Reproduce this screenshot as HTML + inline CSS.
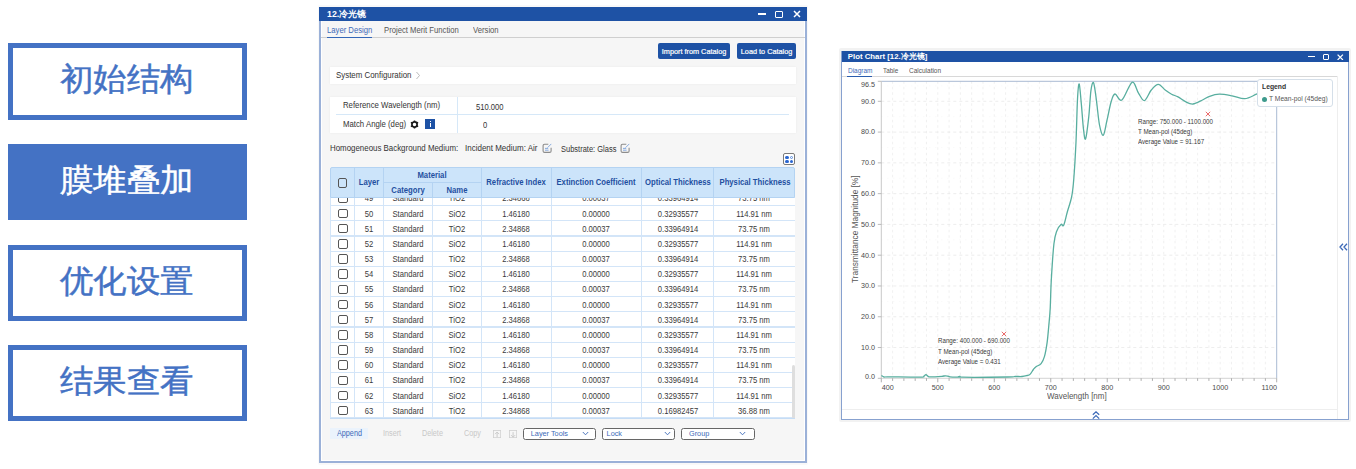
<!DOCTYPE html><html><head><meta charset="utf-8"><style>
*{margin:0;padding:0;box-sizing:border-box}
html,body{width:1356px;height:469px;overflow:hidden;background:#fff}
body{position:relative;font-family:'Liberation Sans',sans-serif;}
.a{position:absolute}
.t{position:absolute;white-space:nowrap;line-height:1}
.box{position:absolute;left:8px;width:239px;border:5px solid #4472c4;color:#4472c4;font-size:32px;text-align:center;}
.bt{display:inline-block;transform:translate(-1.5px,-2px) scaleX(1.045);-webkit-text-stroke:0.45px currentColor}
</style></head><body>

<div class="box" style="top:43px;height:77px;line-height:67px;"><span class="bt">初始结构</span></div>
<div class="box" style="top:144px;height:76px;line-height:66px;background:#4472c4;color:#fff;"><span class="bt">膜堆叠加</span></div>
<div class="box" style="top:245px;height:76px;line-height:66px;"><span class="bt">优化设置</span></div>
<div class="box" style="top:345px;height:76px;line-height:66px;"><span class="bt">结果查看</span></div>
<div class="a" style="left:318px;top:5px;width:490px;height:460px;background:rgba(0,0,0,0.025);border-radius:2px"></div>
<div class="a" style="left:319px;top:7px;width:488px;height:456px;background:#fff;border:2px solid #9bb1d8;border-top:none"></div>
<div class="a" style="left:322px;top:21px;width:482px;height:439px;background:#f6f6f6"></div>
<div class="a" style="left:319px;top:7px;width:488px;height:14px;background:#1e52a5"></div>
<div class="t" style="left:327px;top:9.6px;font-size:8.8px;font-weight:bold;color:#fff">12.冷光镜</div>
<div class="a" style="left:758px;top:13px;width:8px;height:1.5px;background:#fff"></div>
<div class="a" style="left:775px;top:10.5px;width:8px;height:7px;border:1.5px solid #fff;border-radius:1px"></div>
<svg class="a" style="left:793px;top:10px" width="8" height="8" viewBox="0 0 8 8"><path d="M1 1L7 7M7 1L1 7" stroke="#fff" stroke-width="1.5"/></svg>
<div class="a" style="left:321px;top:37px;width:484px;height:1px;background:#cfcfcf"></div>
<div class="a" style="left:326.5px;top:36.6px;width:45.5px;height:1.2px;background:#3467b8"></div>
<div class="t" style="left:326.6px;top:25.50px;font-size:8.70px;color:#3d6ab8;transform:scaleX(0.8850);transform-origin:0 50%">Layer Design</div>
<div class="t" style="left:383.7px;top:25.50px;font-size:8.70px;color:#555;transform:scaleX(0.8850);transform-origin:0 50%">Project Merit Function</div>
<div class="t" style="left:473.4px;top:25.50px;font-size:8.70px;color:#555;transform:scaleX(0.8850);transform-origin:0 50%">Version</div>
<div class="a" style="left:658px;top:43.3px;width:71.5px;height:15.7px;background:#1e52a5;border-radius:2px"></div>
<div class="t" style="left:661.8px;top:47.5px;font-size:7.3px;color:#fff;-webkit-text-stroke:0.2px #fff">Import from Catalog</div>
<div class="a" style="left:737px;top:43.3px;width:59px;height:15.7px;background:#1e52a5;border-radius:2px"></div>
<div class="t" style="left:740.8px;top:47.5px;font-size:7.3px;color:#fff;-webkit-text-stroke:0.2px #fff">Load to Catalog</div>
<div class="a" style="left:330px;top:67px;width:466px;height:17px;background:#fff;box-shadow:0 0 2px rgba(0,0,0,0.06)"></div>
<div class="t" style="left:336px;top:71.49px;font-size:8.93px;color:#333;transform:scaleX(0.8850);transform-origin:0 50%">System Configuration</div>
<svg class="a" style="left:415px;top:71px" width="6" height="9" viewBox="0 0 6 9"><path d="M1.5 1L4.5 4.5L1.5 8" stroke="#aaa" stroke-width="0.8" fill="none"/></svg>
<div class="a" style="left:330px;top:96.7px;width:466px;height:36px;background:#fff;box-shadow:0 0 2px rgba(0,0,0,0.06)"></div>
<div class="a" style="left:336px;top:114px;width:453px;height:1px;background:#d6e8f8"></div>
<div class="a" style="left:457px;top:96.7px;width:1px;height:36px;background:#d6e8f8"></div>
<div class="t" style="left:342.7px;top:101.49px;font-size:8.81px;color:#333;transform:scaleX(0.8850);transform-origin:0 50%">Reference Wavelength (nm)</div>
<div class="t" style="left:342.7px;top:119.99px;font-size:8.81px;color:#333;transform:scaleX(0.8850);transform-origin:0 50%">Match Angle (deg)</div>
<div class="t" style="left:476.4px;top:102.51px;font-size:8.59px;color:#333;transform:scaleX(0.8850);transform-origin:0 50%">510.000</div>
<div class="t" style="left:483.3px;top:121.01px;font-size:8.59px;color:#333;transform:scaleX(0.8850);transform-origin:0 50%">0</div>
<svg class="a" style="left:410px;top:119.5px" width="9" height="9" viewBox="0 0 9 9"><circle cx="4.5" cy="4.5" r="2.6" fill="none" stroke="#1a1a1a" stroke-width="1.7"/><g stroke="#1a1a1a" stroke-width="1.5"><path d="M4.5 0.4V1.9M4.5 7.1V8.6M0.9 2.4L2.2 3.2M6.8 5.8L8.1 6.6M0.9 6.6L2.2 5.8M6.8 3.2L8.1 2.4"/></g></svg>
<div class="a" style="left:425.4px;top:119.4px;width:9.7px;height:9.7px;background:#1e52a5"></div>
<div class="a" style="left:429.6px;top:121px;width:1.4px;height:1.4px;background:#fff"></div>
<div class="a" style="left:429.6px;top:123.2px;width:1.4px;height:4.3px;background:#fff"></div>
<div class="t" style="left:330px;top:144.49px;font-size:8.93px;color:#333;transform:scaleX(0.8850);transform-origin:0 50%">Homogeneous Background Medium:</div>
<div class="t" style="left:465.4px;top:144.48px;font-size:9.04px;color:#333;transform:scaleX(0.8850);transform-origin:0 50%">Incident Medium: Air</div>
<div class="t" style="left:561.3px;top:144.51px;font-size:8.47px;color:#333;transform:scaleX(0.8850);transform-origin:0 50%">Substrate: Glass</div>
<svg class="a" style="left:542.2px;top:143.3px" width="10" height="10.5" viewBox="0 0 10 10.5"><path d="M6.3 1.2H2.6Q1.1 1.2 1.1 2.7V7.9Q1.1 9.4 2.6 9.4H7.6Q9.1 9.4 9.1 7.9V4.8" fill="none" stroke="#8c8c8c" stroke-width="1.1"/><path d="M3 5.4H6.2M3 7.2H6.6" stroke="#7ba3dc" stroke-width="0.9"/><path d="M5.6 4.6L9.3 0.9" stroke="#7ba3dc" stroke-width="0.9"/></svg>
<svg class="a" style="left:620px;top:143.3px" width="10" height="10.5" viewBox="0 0 10 10.5"><path d="M6.3 1.2H2.6Q1.1 1.2 1.1 2.7V7.9Q1.1 9.4 2.6 9.4H7.6Q9.1 9.4 9.1 7.9V4.8" fill="none" stroke="#8c8c8c" stroke-width="1.1"/><path d="M3 5.4H6.2M3 7.2H6.6" stroke="#7ba3dc" stroke-width="0.9"/><path d="M5.6 4.6L9.3 0.9" stroke="#7ba3dc" stroke-width="0.9"/></svg>
<div class="a" style="left:783px;top:153.2px;width:12px;height:11.6px;border:1.3px solid #7a7a7a;border-radius:2px;background:#fff"></div>
<div class="a" style="left:785.3px;top:155.5px;width:3.3px;height:3.3px;border-radius:50%;background:#2a66d0;border:none"></div>
<div class="a" style="left:789.9px;top:155.5px;width:3.3px;height:3.3px;border-radius:50%;background:#fff;border:0.7px solid #5a8ee0"></div>
<div class="a" style="left:785.3px;top:159.9px;width:3.3px;height:3.3px;border-radius:50%;background:#2a66d0;border:none"></div>
<div class="a" style="left:789.9px;top:159.9px;width:3.3px;height:3.3px;border-radius:50%;background:#2a66d0;border:none"></div>
<div class="a" style="left:330px;top:197.8px;width:465px;height:220.39999999999998px;background:#fff"></div>
<div class="a" style="left:330px;top:197.8px;width:465px;height:220.39999999999998px;overflow:hidden">
<div class="a" style="left:0;top:7.20px;width:465px;height:1.2px;background:#d3e5f8"></div>
<div class="a" style="left:8.3px;top:-4.17px;width:9.4px;height:9.4px;border:1.4px solid #555;border-radius:2px"></div>
<div class="t" style="left:-1.00px;width:80px;text-align:center;top:-3.37px;font-size:8.64px;color:#3a3a3a;transform:scaleX(0.8850);transform-origin:50% 50%">49</div>
<div class="t" style="left:37.85px;width:80px;text-align:center;top:-3.37px;font-size:8.64px;color:#3a3a3a;transform:scaleX(0.8850);transform-origin:50% 50%">Standard</div>
<div class="t" style="left:86.85px;width:80px;text-align:center;top:-3.37px;font-size:8.64px;color:#3a3a3a;transform:scaleX(0.8850);transform-origin:50% 50%">TiO2</div>
<div class="t" style="left:146.35px;width:80px;text-align:center;top:-3.37px;font-size:8.64px;color:#3a3a3a;transform:scaleX(0.8850);transform-origin:50% 50%">2.34868</div>
<div class="t" style="left:226.30px;width:80px;text-align:center;top:-3.37px;font-size:8.64px;color:#3a3a3a;transform:scaleX(0.8850);transform-origin:50% 50%">0.00037</div>
<div class="t" style="left:307.60px;width:80px;text-align:center;top:-3.37px;font-size:8.64px;color:#3a3a3a;transform:scaleX(0.8850);transform-origin:50% 50%">0.33964914</div>
<div class="t" style="left:384.45px;width:80px;text-align:center;top:-3.37px;font-size:8.64px;color:#3a3a3a;transform:scaleX(0.8850);transform-origin:50% 50%">73.75 nm</div>
<div class="a" style="left:0;top:22.37px;width:465px;height:1.2px;background:#d3e5f8"></div>
<div class="a" style="left:8.3px;top:11.00px;width:9.4px;height:9.4px;border:1.4px solid #555;border-radius:2px"></div>
<div class="t" style="left:-1.00px;width:80px;text-align:center;top:11.80px;font-size:8.64px;color:#3a3a3a;transform:scaleX(0.8850);transform-origin:50% 50%">50</div>
<div class="t" style="left:37.85px;width:80px;text-align:center;top:11.80px;font-size:8.64px;color:#3a3a3a;transform:scaleX(0.8850);transform-origin:50% 50%">Standard</div>
<div class="t" style="left:86.85px;width:80px;text-align:center;top:11.80px;font-size:8.64px;color:#3a3a3a;transform:scaleX(0.8850);transform-origin:50% 50%">SiO2</div>
<div class="t" style="left:146.35px;width:80px;text-align:center;top:11.80px;font-size:8.64px;color:#3a3a3a;transform:scaleX(0.8850);transform-origin:50% 50%">1.46180</div>
<div class="t" style="left:226.30px;width:80px;text-align:center;top:11.80px;font-size:8.64px;color:#3a3a3a;transform:scaleX(0.8850);transform-origin:50% 50%">0.00000</div>
<div class="t" style="left:307.60px;width:80px;text-align:center;top:11.80px;font-size:8.64px;color:#3a3a3a;transform:scaleX(0.8850);transform-origin:50% 50%">0.32935577</div>
<div class="t" style="left:384.45px;width:80px;text-align:center;top:11.80px;font-size:8.64px;color:#3a3a3a;transform:scaleX(0.8850);transform-origin:50% 50%">114.91 nm</div>
<div class="a" style="left:0;top:37.54px;width:465px;height:1.2px;background:#d3e5f8"></div>
<div class="a" style="left:8.3px;top:26.17px;width:9.4px;height:9.4px;border:1.4px solid #555;border-radius:2px"></div>
<div class="t" style="left:-1.00px;width:80px;text-align:center;top:26.97px;font-size:8.64px;color:#3a3a3a;transform:scaleX(0.8850);transform-origin:50% 50%">51</div>
<div class="t" style="left:37.85px;width:80px;text-align:center;top:26.97px;font-size:8.64px;color:#3a3a3a;transform:scaleX(0.8850);transform-origin:50% 50%">Standard</div>
<div class="t" style="left:86.85px;width:80px;text-align:center;top:26.97px;font-size:8.64px;color:#3a3a3a;transform:scaleX(0.8850);transform-origin:50% 50%">TiO2</div>
<div class="t" style="left:146.35px;width:80px;text-align:center;top:26.97px;font-size:8.64px;color:#3a3a3a;transform:scaleX(0.8850);transform-origin:50% 50%">2.34868</div>
<div class="t" style="left:226.30px;width:80px;text-align:center;top:26.97px;font-size:8.64px;color:#3a3a3a;transform:scaleX(0.8850);transform-origin:50% 50%">0.00037</div>
<div class="t" style="left:307.60px;width:80px;text-align:center;top:26.97px;font-size:8.64px;color:#3a3a3a;transform:scaleX(0.8850);transform-origin:50% 50%">0.33964914</div>
<div class="t" style="left:384.45px;width:80px;text-align:center;top:26.97px;font-size:8.64px;color:#3a3a3a;transform:scaleX(0.8850);transform-origin:50% 50%">73.75 nm</div>
<div class="a" style="left:0;top:52.71px;width:465px;height:1.2px;background:#d3e5f8"></div>
<div class="a" style="left:8.3px;top:41.34px;width:9.4px;height:9.4px;border:1.4px solid #555;border-radius:2px"></div>
<div class="t" style="left:-1.00px;width:80px;text-align:center;top:42.14px;font-size:8.64px;color:#3a3a3a;transform:scaleX(0.8850);transform-origin:50% 50%">52</div>
<div class="t" style="left:37.85px;width:80px;text-align:center;top:42.14px;font-size:8.64px;color:#3a3a3a;transform:scaleX(0.8850);transform-origin:50% 50%">Standard</div>
<div class="t" style="left:86.85px;width:80px;text-align:center;top:42.14px;font-size:8.64px;color:#3a3a3a;transform:scaleX(0.8850);transform-origin:50% 50%">SiO2</div>
<div class="t" style="left:146.35px;width:80px;text-align:center;top:42.14px;font-size:8.64px;color:#3a3a3a;transform:scaleX(0.8850);transform-origin:50% 50%">1.46180</div>
<div class="t" style="left:226.30px;width:80px;text-align:center;top:42.14px;font-size:8.64px;color:#3a3a3a;transform:scaleX(0.8850);transform-origin:50% 50%">0.00000</div>
<div class="t" style="left:307.60px;width:80px;text-align:center;top:42.14px;font-size:8.64px;color:#3a3a3a;transform:scaleX(0.8850);transform-origin:50% 50%">0.32935577</div>
<div class="t" style="left:384.45px;width:80px;text-align:center;top:42.14px;font-size:8.64px;color:#3a3a3a;transform:scaleX(0.8850);transform-origin:50% 50%">114.91 nm</div>
<div class="a" style="left:0;top:67.88px;width:465px;height:1.2px;background:#d3e5f8"></div>
<div class="a" style="left:8.3px;top:56.51px;width:9.4px;height:9.4px;border:1.4px solid #555;border-radius:2px"></div>
<div class="t" style="left:-1.00px;width:80px;text-align:center;top:57.31px;font-size:8.64px;color:#3a3a3a;transform:scaleX(0.8850);transform-origin:50% 50%">53</div>
<div class="t" style="left:37.85px;width:80px;text-align:center;top:57.31px;font-size:8.64px;color:#3a3a3a;transform:scaleX(0.8850);transform-origin:50% 50%">Standard</div>
<div class="t" style="left:86.85px;width:80px;text-align:center;top:57.31px;font-size:8.64px;color:#3a3a3a;transform:scaleX(0.8850);transform-origin:50% 50%">TiO2</div>
<div class="t" style="left:146.35px;width:80px;text-align:center;top:57.31px;font-size:8.64px;color:#3a3a3a;transform:scaleX(0.8850);transform-origin:50% 50%">2.34868</div>
<div class="t" style="left:226.30px;width:80px;text-align:center;top:57.31px;font-size:8.64px;color:#3a3a3a;transform:scaleX(0.8850);transform-origin:50% 50%">0.00037</div>
<div class="t" style="left:307.60px;width:80px;text-align:center;top:57.31px;font-size:8.64px;color:#3a3a3a;transform:scaleX(0.8850);transform-origin:50% 50%">0.33964914</div>
<div class="t" style="left:384.45px;width:80px;text-align:center;top:57.31px;font-size:8.64px;color:#3a3a3a;transform:scaleX(0.8850);transform-origin:50% 50%">73.75 nm</div>
<div class="a" style="left:0;top:83.05px;width:465px;height:1.2px;background:#d3e5f8"></div>
<div class="a" style="left:8.3px;top:71.68px;width:9.4px;height:9.4px;border:1.4px solid #555;border-radius:2px"></div>
<div class="t" style="left:-1.00px;width:80px;text-align:center;top:72.48px;font-size:8.64px;color:#3a3a3a;transform:scaleX(0.8850);transform-origin:50% 50%">54</div>
<div class="t" style="left:37.85px;width:80px;text-align:center;top:72.48px;font-size:8.64px;color:#3a3a3a;transform:scaleX(0.8850);transform-origin:50% 50%">Standard</div>
<div class="t" style="left:86.85px;width:80px;text-align:center;top:72.48px;font-size:8.64px;color:#3a3a3a;transform:scaleX(0.8850);transform-origin:50% 50%">SiO2</div>
<div class="t" style="left:146.35px;width:80px;text-align:center;top:72.48px;font-size:8.64px;color:#3a3a3a;transform:scaleX(0.8850);transform-origin:50% 50%">1.46180</div>
<div class="t" style="left:226.30px;width:80px;text-align:center;top:72.48px;font-size:8.64px;color:#3a3a3a;transform:scaleX(0.8850);transform-origin:50% 50%">0.00000</div>
<div class="t" style="left:307.60px;width:80px;text-align:center;top:72.48px;font-size:8.64px;color:#3a3a3a;transform:scaleX(0.8850);transform-origin:50% 50%">0.32935577</div>
<div class="t" style="left:384.45px;width:80px;text-align:center;top:72.48px;font-size:8.64px;color:#3a3a3a;transform:scaleX(0.8850);transform-origin:50% 50%">114.91 nm</div>
<div class="a" style="left:0;top:98.22px;width:465px;height:1.2px;background:#d3e5f8"></div>
<div class="a" style="left:8.3px;top:86.85px;width:9.4px;height:9.4px;border:1.4px solid #555;border-radius:2px"></div>
<div class="t" style="left:-1.00px;width:80px;text-align:center;top:87.65px;font-size:8.64px;color:#3a3a3a;transform:scaleX(0.8850);transform-origin:50% 50%">55</div>
<div class="t" style="left:37.85px;width:80px;text-align:center;top:87.65px;font-size:8.64px;color:#3a3a3a;transform:scaleX(0.8850);transform-origin:50% 50%">Standard</div>
<div class="t" style="left:86.85px;width:80px;text-align:center;top:87.65px;font-size:8.64px;color:#3a3a3a;transform:scaleX(0.8850);transform-origin:50% 50%">TiO2</div>
<div class="t" style="left:146.35px;width:80px;text-align:center;top:87.65px;font-size:8.64px;color:#3a3a3a;transform:scaleX(0.8850);transform-origin:50% 50%">2.34868</div>
<div class="t" style="left:226.30px;width:80px;text-align:center;top:87.65px;font-size:8.64px;color:#3a3a3a;transform:scaleX(0.8850);transform-origin:50% 50%">0.00037</div>
<div class="t" style="left:307.60px;width:80px;text-align:center;top:87.65px;font-size:8.64px;color:#3a3a3a;transform:scaleX(0.8850);transform-origin:50% 50%">0.33964914</div>
<div class="t" style="left:384.45px;width:80px;text-align:center;top:87.65px;font-size:8.64px;color:#3a3a3a;transform:scaleX(0.8850);transform-origin:50% 50%">73.75 nm</div>
<div class="a" style="left:0;top:113.39px;width:465px;height:1.2px;background:#d3e5f8"></div>
<div class="a" style="left:8.3px;top:102.02px;width:9.4px;height:9.4px;border:1.4px solid #555;border-radius:2px"></div>
<div class="t" style="left:-1.00px;width:80px;text-align:center;top:102.82px;font-size:8.64px;color:#3a3a3a;transform:scaleX(0.8850);transform-origin:50% 50%">56</div>
<div class="t" style="left:37.85px;width:80px;text-align:center;top:102.82px;font-size:8.64px;color:#3a3a3a;transform:scaleX(0.8850);transform-origin:50% 50%">Standard</div>
<div class="t" style="left:86.85px;width:80px;text-align:center;top:102.82px;font-size:8.64px;color:#3a3a3a;transform:scaleX(0.8850);transform-origin:50% 50%">SiO2</div>
<div class="t" style="left:146.35px;width:80px;text-align:center;top:102.82px;font-size:8.64px;color:#3a3a3a;transform:scaleX(0.8850);transform-origin:50% 50%">1.46180</div>
<div class="t" style="left:226.30px;width:80px;text-align:center;top:102.82px;font-size:8.64px;color:#3a3a3a;transform:scaleX(0.8850);transform-origin:50% 50%">0.00000</div>
<div class="t" style="left:307.60px;width:80px;text-align:center;top:102.82px;font-size:8.64px;color:#3a3a3a;transform:scaleX(0.8850);transform-origin:50% 50%">0.32935577</div>
<div class="t" style="left:384.45px;width:80px;text-align:center;top:102.82px;font-size:8.64px;color:#3a3a3a;transform:scaleX(0.8850);transform-origin:50% 50%">114.91 nm</div>
<div class="a" style="left:0;top:128.56px;width:465px;height:1.2px;background:#d3e5f8"></div>
<div class="a" style="left:8.3px;top:117.19px;width:9.4px;height:9.4px;border:1.4px solid #555;border-radius:2px"></div>
<div class="t" style="left:-1.00px;width:80px;text-align:center;top:117.99px;font-size:8.64px;color:#3a3a3a;transform:scaleX(0.8850);transform-origin:50% 50%">57</div>
<div class="t" style="left:37.85px;width:80px;text-align:center;top:117.99px;font-size:8.64px;color:#3a3a3a;transform:scaleX(0.8850);transform-origin:50% 50%">Standard</div>
<div class="t" style="left:86.85px;width:80px;text-align:center;top:117.99px;font-size:8.64px;color:#3a3a3a;transform:scaleX(0.8850);transform-origin:50% 50%">TiO2</div>
<div class="t" style="left:146.35px;width:80px;text-align:center;top:117.99px;font-size:8.64px;color:#3a3a3a;transform:scaleX(0.8850);transform-origin:50% 50%">2.34868</div>
<div class="t" style="left:226.30px;width:80px;text-align:center;top:117.99px;font-size:8.64px;color:#3a3a3a;transform:scaleX(0.8850);transform-origin:50% 50%">0.00037</div>
<div class="t" style="left:307.60px;width:80px;text-align:center;top:117.99px;font-size:8.64px;color:#3a3a3a;transform:scaleX(0.8850);transform-origin:50% 50%">0.33964914</div>
<div class="t" style="left:384.45px;width:80px;text-align:center;top:117.99px;font-size:8.64px;color:#3a3a3a;transform:scaleX(0.8850);transform-origin:50% 50%">73.75 nm</div>
<div class="a" style="left:0;top:143.73px;width:465px;height:1.2px;background:#d3e5f8"></div>
<div class="a" style="left:8.3px;top:132.36px;width:9.4px;height:9.4px;border:1.4px solid #555;border-radius:2px"></div>
<div class="t" style="left:-1.00px;width:80px;text-align:center;top:133.16px;font-size:8.64px;color:#3a3a3a;transform:scaleX(0.8850);transform-origin:50% 50%">58</div>
<div class="t" style="left:37.85px;width:80px;text-align:center;top:133.16px;font-size:8.64px;color:#3a3a3a;transform:scaleX(0.8850);transform-origin:50% 50%">Standard</div>
<div class="t" style="left:86.85px;width:80px;text-align:center;top:133.16px;font-size:8.64px;color:#3a3a3a;transform:scaleX(0.8850);transform-origin:50% 50%">SiO2</div>
<div class="t" style="left:146.35px;width:80px;text-align:center;top:133.16px;font-size:8.64px;color:#3a3a3a;transform:scaleX(0.8850);transform-origin:50% 50%">1.46180</div>
<div class="t" style="left:226.30px;width:80px;text-align:center;top:133.16px;font-size:8.64px;color:#3a3a3a;transform:scaleX(0.8850);transform-origin:50% 50%">0.00000</div>
<div class="t" style="left:307.60px;width:80px;text-align:center;top:133.16px;font-size:8.64px;color:#3a3a3a;transform:scaleX(0.8850);transform-origin:50% 50%">0.32935577</div>
<div class="t" style="left:384.45px;width:80px;text-align:center;top:133.16px;font-size:8.64px;color:#3a3a3a;transform:scaleX(0.8850);transform-origin:50% 50%">114.91 nm</div>
<div class="a" style="left:0;top:158.90px;width:465px;height:1.2px;background:#d3e5f8"></div>
<div class="a" style="left:8.3px;top:147.53px;width:9.4px;height:9.4px;border:1.4px solid #555;border-radius:2px"></div>
<div class="t" style="left:-1.00px;width:80px;text-align:center;top:148.33px;font-size:8.64px;color:#3a3a3a;transform:scaleX(0.8850);transform-origin:50% 50%">59</div>
<div class="t" style="left:37.85px;width:80px;text-align:center;top:148.33px;font-size:8.64px;color:#3a3a3a;transform:scaleX(0.8850);transform-origin:50% 50%">Standard</div>
<div class="t" style="left:86.85px;width:80px;text-align:center;top:148.33px;font-size:8.64px;color:#3a3a3a;transform:scaleX(0.8850);transform-origin:50% 50%">TiO2</div>
<div class="t" style="left:146.35px;width:80px;text-align:center;top:148.33px;font-size:8.64px;color:#3a3a3a;transform:scaleX(0.8850);transform-origin:50% 50%">2.34868</div>
<div class="t" style="left:226.30px;width:80px;text-align:center;top:148.33px;font-size:8.64px;color:#3a3a3a;transform:scaleX(0.8850);transform-origin:50% 50%">0.00037</div>
<div class="t" style="left:307.60px;width:80px;text-align:center;top:148.33px;font-size:8.64px;color:#3a3a3a;transform:scaleX(0.8850);transform-origin:50% 50%">0.33964914</div>
<div class="t" style="left:384.45px;width:80px;text-align:center;top:148.33px;font-size:8.64px;color:#3a3a3a;transform:scaleX(0.8850);transform-origin:50% 50%">73.75 nm</div>
<div class="a" style="left:0;top:174.07px;width:465px;height:1.2px;background:#d3e5f8"></div>
<div class="a" style="left:8.3px;top:162.70px;width:9.4px;height:9.4px;border:1.4px solid #555;border-radius:2px"></div>
<div class="t" style="left:-1.00px;width:80px;text-align:center;top:163.50px;font-size:8.64px;color:#3a3a3a;transform:scaleX(0.8850);transform-origin:50% 50%">60</div>
<div class="t" style="left:37.85px;width:80px;text-align:center;top:163.50px;font-size:8.64px;color:#3a3a3a;transform:scaleX(0.8850);transform-origin:50% 50%">Standard</div>
<div class="t" style="left:86.85px;width:80px;text-align:center;top:163.50px;font-size:8.64px;color:#3a3a3a;transform:scaleX(0.8850);transform-origin:50% 50%">SiO2</div>
<div class="t" style="left:146.35px;width:80px;text-align:center;top:163.50px;font-size:8.64px;color:#3a3a3a;transform:scaleX(0.8850);transform-origin:50% 50%">1.46180</div>
<div class="t" style="left:226.30px;width:80px;text-align:center;top:163.50px;font-size:8.64px;color:#3a3a3a;transform:scaleX(0.8850);transform-origin:50% 50%">0.00000</div>
<div class="t" style="left:307.60px;width:80px;text-align:center;top:163.50px;font-size:8.64px;color:#3a3a3a;transform:scaleX(0.8850);transform-origin:50% 50%">0.32935577</div>
<div class="t" style="left:384.45px;width:80px;text-align:center;top:163.50px;font-size:8.64px;color:#3a3a3a;transform:scaleX(0.8850);transform-origin:50% 50%">114.91 nm</div>
<div class="a" style="left:0;top:189.24px;width:465px;height:1.2px;background:#d3e5f8"></div>
<div class="a" style="left:8.3px;top:177.87px;width:9.4px;height:9.4px;border:1.4px solid #555;border-radius:2px"></div>
<div class="t" style="left:-1.00px;width:80px;text-align:center;top:178.67px;font-size:8.64px;color:#3a3a3a;transform:scaleX(0.8850);transform-origin:50% 50%">61</div>
<div class="t" style="left:37.85px;width:80px;text-align:center;top:178.67px;font-size:8.64px;color:#3a3a3a;transform:scaleX(0.8850);transform-origin:50% 50%">Standard</div>
<div class="t" style="left:86.85px;width:80px;text-align:center;top:178.67px;font-size:8.64px;color:#3a3a3a;transform:scaleX(0.8850);transform-origin:50% 50%">TiO2</div>
<div class="t" style="left:146.35px;width:80px;text-align:center;top:178.67px;font-size:8.64px;color:#3a3a3a;transform:scaleX(0.8850);transform-origin:50% 50%">2.34868</div>
<div class="t" style="left:226.30px;width:80px;text-align:center;top:178.67px;font-size:8.64px;color:#3a3a3a;transform:scaleX(0.8850);transform-origin:50% 50%">0.00037</div>
<div class="t" style="left:307.60px;width:80px;text-align:center;top:178.67px;font-size:8.64px;color:#3a3a3a;transform:scaleX(0.8850);transform-origin:50% 50%">0.33964914</div>
<div class="t" style="left:384.45px;width:80px;text-align:center;top:178.67px;font-size:8.64px;color:#3a3a3a;transform:scaleX(0.8850);transform-origin:50% 50%">73.75 nm</div>
<div class="a" style="left:0;top:204.41px;width:465px;height:1.2px;background:#d3e5f8"></div>
<div class="a" style="left:8.3px;top:193.04px;width:9.4px;height:9.4px;border:1.4px solid #555;border-radius:2px"></div>
<div class="t" style="left:-1.00px;width:80px;text-align:center;top:193.84px;font-size:8.64px;color:#3a3a3a;transform:scaleX(0.8850);transform-origin:50% 50%">62</div>
<div class="t" style="left:37.85px;width:80px;text-align:center;top:193.84px;font-size:8.64px;color:#3a3a3a;transform:scaleX(0.8850);transform-origin:50% 50%">Standard</div>
<div class="t" style="left:86.85px;width:80px;text-align:center;top:193.84px;font-size:8.64px;color:#3a3a3a;transform:scaleX(0.8850);transform-origin:50% 50%">SiO2</div>
<div class="t" style="left:146.35px;width:80px;text-align:center;top:193.84px;font-size:8.64px;color:#3a3a3a;transform:scaleX(0.8850);transform-origin:50% 50%">1.46180</div>
<div class="t" style="left:226.30px;width:80px;text-align:center;top:193.84px;font-size:8.64px;color:#3a3a3a;transform:scaleX(0.8850);transform-origin:50% 50%">0.00000</div>
<div class="t" style="left:307.60px;width:80px;text-align:center;top:193.84px;font-size:8.64px;color:#3a3a3a;transform:scaleX(0.8850);transform-origin:50% 50%">0.32935577</div>
<div class="t" style="left:384.45px;width:80px;text-align:center;top:193.84px;font-size:8.64px;color:#3a3a3a;transform:scaleX(0.8850);transform-origin:50% 50%">114.91 nm</div>
<div class="a" style="left:0;top:219.58px;width:465px;height:1.2px;background:#d3e5f8"></div>
<div class="a" style="left:8.3px;top:208.21px;width:9.4px;height:9.4px;border:1.4px solid #555;border-radius:2px"></div>
<div class="t" style="left:-1.00px;width:80px;text-align:center;top:209.01px;font-size:8.64px;color:#3a3a3a;transform:scaleX(0.8850);transform-origin:50% 50%">63</div>
<div class="t" style="left:37.85px;width:80px;text-align:center;top:209.01px;font-size:8.64px;color:#3a3a3a;transform:scaleX(0.8850);transform-origin:50% 50%">Standard</div>
<div class="t" style="left:86.85px;width:80px;text-align:center;top:209.01px;font-size:8.64px;color:#3a3a3a;transform:scaleX(0.8850);transform-origin:50% 50%">TiO2</div>
<div class="t" style="left:146.35px;width:80px;text-align:center;top:209.01px;font-size:8.64px;color:#3a3a3a;transform:scaleX(0.8850);transform-origin:50% 50%">2.34868</div>
<div class="t" style="left:226.30px;width:80px;text-align:center;top:209.01px;font-size:8.64px;color:#3a3a3a;transform:scaleX(0.8850);transform-origin:50% 50%">0.00037</div>
<div class="t" style="left:307.60px;width:80px;text-align:center;top:209.01px;font-size:8.64px;color:#3a3a3a;transform:scaleX(0.8850);transform-origin:50% 50%">0.16982457</div>
<div class="t" style="left:384.45px;width:80px;text-align:center;top:209.01px;font-size:8.64px;color:#3a3a3a;transform:scaleX(0.8850);transform-origin:50% 50%">36.88 nm</div>
</div>
<div class="a" style="left:354.10px;top:197.8px;width:1px;height:220.39999999999998px;background:#d3e5f8"></div>
<div class="a" style="left:382.90px;top:197.8px;width:1px;height:220.39999999999998px;background:#d3e5f8"></div>
<div class="a" style="left:431.80px;top:197.8px;width:1px;height:220.39999999999998px;background:#d3e5f8"></div>
<div class="a" style="left:480.90px;top:197.8px;width:1px;height:220.39999999999998px;background:#d3e5f8"></div>
<div class="a" style="left:550.80px;top:197.8px;width:1px;height:220.39999999999998px;background:#d3e5f8"></div>
<div class="a" style="left:640.80px;top:197.8px;width:1px;height:220.39999999999998px;background:#d3e5f8"></div>
<div class="a" style="left:713.40px;top:197.8px;width:1px;height:220.39999999999998px;background:#d3e5f8"></div>
<div class="a" style="left:330px;top:197.8px;width:1px;height:220.39999999999998px;background:#d3e5f8"></div>
<div class="a" style="left:330px;top:417.5px;width:465px;height:1px;background:#c5dcf5"></div>
<div class="a" style="left:792.4px;top:365px;width:3px;height:53px;background:#dedede;border-radius:1.5px 1.5px 0 0"></div>
<div class="a" style="left:330px;top:167px;width:465px;height:30.80000000000001px;background:#cce4fa;border:1px solid #b4d3f2;border-radius:2px 2px 0 0"></div>
<div class="a" style="left:354.10px;top:167px;width:1px;height:30.80000000000001px;background:#b4d3f2"></div>
<div class="a" style="left:382.90px;top:167px;width:1px;height:30.80000000000001px;background:#b4d3f2"></div>
<div class="a" style="left:480.90px;top:167px;width:1px;height:30.80000000000001px;background:#b4d3f2"></div>
<div class="a" style="left:550.80px;top:167px;width:1px;height:30.80000000000001px;background:#b4d3f2"></div>
<div class="a" style="left:640.80px;top:167px;width:1px;height:30.80000000000001px;background:#b4d3f2"></div>
<div class="a" style="left:713.40px;top:167px;width:1px;height:30.80000000000001px;background:#b4d3f2"></div>
<div class="a" style="left:432px;top:182.4px;width:1px;height:15.400000000000006px;background:#b4d3f2"></div>
<div class="a" style="left:383.4px;top:182px;width:98px;height:1px;background:#b4d3f2"></div>
<div class="a" style="left:338.1px;top:178.4px;width:9px;height:9.4px;border:1.4px solid #555;border-radius:2px"></div>
<div class="t" style="left:319.00px;width:100px;text-align:center;top:178.36px;font-size:8.70px;font-weight:bold;color:#1f4fa0;transform:scaleX(0.8850);transform-origin:50% 50%">Layer</div>
<div class="t" style="left:382.40px;width:100px;text-align:center;top:171.06px;font-size:8.70px;font-weight:bold;color:#1f4fa0;transform:scaleX(0.8850);transform-origin:50% 50%">Material</div>
<div class="t" style="left:357.90px;width:100px;text-align:center;top:186.36px;font-size:8.70px;font-weight:bold;color:#1f4fa0;transform:scaleX(0.8850);transform-origin:50% 50%">Category</div>
<div class="t" style="left:406.90px;width:100px;text-align:center;top:186.36px;font-size:8.70px;font-weight:bold;color:#1f4fa0;transform:scaleX(0.8850);transform-origin:50% 50%">Name</div>
<div class="t" style="left:466.40px;width:100px;text-align:center;top:178.36px;font-size:8.70px;font-weight:bold;color:#1f4fa0;transform:scaleX(0.8850);transform-origin:50% 50%">Refractive Index</div>
<div class="t" style="left:546.30px;width:100px;text-align:center;top:178.36px;font-size:8.70px;font-weight:bold;color:#1f4fa0;transform:scaleX(0.8850);transform-origin:50% 50%">Extinction Coefficient</div>
<div class="t" style="left:627.60px;width:100px;text-align:center;top:178.36px;font-size:8.70px;font-weight:bold;color:#1f4fa0;transform:scaleX(0.8850);transform-origin:50% 50%">Optical Thickness</div>
<div class="t" style="left:704.50px;width:100px;text-align:center;top:178.36px;font-size:8.70px;font-weight:bold;color:#1f4fa0;transform:scaleX(0.8850);transform-origin:50% 50%">Physical Thickness</div>
<div class="a" style="left:330.4px;top:427.8px;width:37.6px;height:11.5px;background:#ebf3fc"></div>
<div class="t" style="left:337px;top:429.53px;font-size:8.19px;color:#3d6ab8;transform:scaleX(0.8850);transform-origin:0 50%">Append</div>
<div class="t" style="left:382.7px;top:429.53px;font-size:8.19px;color:#c8c8c8;transform:scaleX(0.8850);transform-origin:0 50%">Insert</div>
<div class="t" style="left:422px;top:429.53px;font-size:8.19px;color:#c8c8c8;transform:scaleX(0.8850);transform-origin:0 50%">Delete</div>
<div class="t" style="left:463.6px;top:429.53px;font-size:8.19px;color:#c8c8c8;transform:scaleX(0.8850);transform-origin:0 50%">Copy</div>
<svg class="a" style="left:493.2px;top:429.7px" width="8.2" height="8.2" viewBox="0 0 8 8"><rect x="0.5" y="0.5" width="7" height="7" fill="none" stroke="#d0d0d0" stroke-width="0.8"/><path d="M4 2V7M2 4L4 2L6 4" stroke="#c8c8c8" stroke-width="0.9" fill="none"/></svg>
<svg class="a" style="left:509.2px;top:429.7px" width="8.2" height="8.2" viewBox="0 0 8 8"><rect x="0.5" y="0.5" width="7" height="7" fill="none" stroke="#d0d0d0" stroke-width="0.8"/><path d="M4 2V7M2 5L4 7L6 5" stroke="#c8c8c8" stroke-width="0.9" fill="none"/></svg>
<div class="a" style="left:523.3px;top:427.5px;width:73.20000000000005px;height:12.3px;border:1.2px solid #666;border-radius:2.5px;background:#fff"></div><div class="t" style="left:530.8px;top:430px;font-size:7.3px;color:#3d6ab8">Layer Tools</div><svg class="a" style="left:581.5px;top:431px" width="7" height="5" viewBox="0 0 7 5"><path d="M0.8 1L3.5 3.8L6.2 1" stroke="#3d6ab8" stroke-width="0.9" fill="none"/></svg>
<div class="a" style="left:602.2px;top:427.5px;width:73.29999999999995px;height:12.3px;border:1.2px solid #666;border-radius:2.5px;background:#fff"></div><div class="t" style="left:606.6px;top:430px;font-size:7.3px;color:#3d6ab8">Lock</div><svg class="a" style="left:663.8px;top:431px" width="7" height="5" viewBox="0 0 7 5"><path d="M0.8 1L3.5 3.8L6.2 1" stroke="#3d6ab8" stroke-width="0.9" fill="none"/></svg>
<div class="a" style="left:681.1px;top:427.5px;width:73.5px;height:12.3px;border:1.2px solid #666;border-radius:2.5px;background:#fff"></div><div class="t" style="left:689px;top:430px;font-size:7.3px;color:#3d6ab8">Group</div><svg class="a" style="left:739.1px;top:431px" width="7" height="5" viewBox="0 0 7 5"><path d="M0.8 1L3.5 3.8L6.2 1" stroke="#3d6ab8" stroke-width="0.9" fill="none"/></svg>
<div class="a" style="left:839px;top:48px;width:512px;height:374px;background:rgba(0,0,0,0.05);border-radius:2px"></div>
<div class="a" style="left:841.2px;top:50.8px;width:507.6px;height:369.1px;background:#fff;border:1.6px solid #87a1cf;border-top:none"></div>
<div class="a" style="left:841.5px;top:50.8px;width:507.0px;height:11.6px;background:#1e52a5"></div>
<div class="t" style="left:847.8px;top:52.6px;font-size:7.8px;font-weight:bold;color:#fff">Plot Chart [12.冷光镜]</div>
<div class="a" style="left:1307.5px;top:55.6px;width:7px;height:1.4px;background:#fff"></div>
<div class="a" style="left:1322.5px;top:53.5px;width:6.8px;height:6.2px;border:1.6px solid #fff;border-radius:1px"></div>
<svg class="a" style="left:1337px;top:53.5px" width="6.5" height="6.5" viewBox="0 0 6.5 6.5"><path d="M0.6 0.6L5.9 5.9M5.9 0.6L0.6 5.9" stroke="#fff" stroke-width="1.3"/></svg>
<div class="t" style="left:847.5px;top:66.58px;font-size:7.34px;color:#3d6ab8;transform:scaleX(0.8850);transform-origin:0 50%">Diagram</div>
<div class="t" style="left:883.2px;top:66.58px;font-size:7.23px;color:#555;transform:scaleX(0.8850);transform-origin:0 50%">Table</div>
<div class="t" style="left:908.6px;top:66.58px;font-size:7.34px;color:#555;transform:scaleX(0.8850);transform-origin:0 50%">Calculation</div>
<div class="a" style="left:842px;top:76px;width:496px;height:1px;background:#d8d8d8"></div>
<div class="a" style="left:847.1px;top:75.6px;width:25.2px;height:1.4px;background:#2a5cae"></div>
<div class="a" style="left:1337.3px;top:76px;width:1px;height:342.5px;background:#eeeeee"></div>
<div class="a" style="left:842px;top:409px;width:496px;height:1px;background:#eeeeee"></div>
<svg class="a" style="left:842px;top:77px" width="496" height="332" viewBox="842 77 496 332">
<line x1="892.60" y1="81.3" x2="892.60" y2="378.3" stroke="#ececec" stroke-width="0.8" stroke-dasharray="2.5,3"/>
<line x1="903.89" y1="81.3" x2="903.89" y2="378.3" stroke="#ececec" stroke-width="0.8" stroke-dasharray="2.5,3"/>
<line x1="915.19" y1="81.3" x2="915.19" y2="378.3" stroke="#ececec" stroke-width="0.8" stroke-dasharray="2.5,3"/>
<line x1="926.49" y1="81.3" x2="926.49" y2="378.3" stroke="#ececec" stroke-width="0.8" stroke-dasharray="2.5,3"/>
<line x1="937.79" y1="81.3" x2="937.79" y2="378.3" stroke="#ececec" stroke-width="0.8" stroke-dasharray="2.5,3"/>
<line x1="949.08" y1="81.3" x2="949.08" y2="378.3" stroke="#ececec" stroke-width="0.8" stroke-dasharray="2.5,3"/>
<line x1="960.38" y1="81.3" x2="960.38" y2="378.3" stroke="#ececec" stroke-width="0.8" stroke-dasharray="2.5,3"/>
<line x1="971.68" y1="81.3" x2="971.68" y2="378.3" stroke="#ececec" stroke-width="0.8" stroke-dasharray="2.5,3"/>
<line x1="982.97" y1="81.3" x2="982.97" y2="378.3" stroke="#ececec" stroke-width="0.8" stroke-dasharray="2.5,3"/>
<line x1="994.27" y1="81.3" x2="994.27" y2="378.3" stroke="#ececec" stroke-width="0.8" stroke-dasharray="2.5,3"/>
<line x1="1005.57" y1="81.3" x2="1005.57" y2="378.3" stroke="#ececec" stroke-width="0.8" stroke-dasharray="2.5,3"/>
<line x1="1016.87" y1="81.3" x2="1016.87" y2="378.3" stroke="#ececec" stroke-width="0.8" stroke-dasharray="2.5,3"/>
<line x1="1028.16" y1="81.3" x2="1028.16" y2="378.3" stroke="#ececec" stroke-width="0.8" stroke-dasharray="2.5,3"/>
<line x1="1039.46" y1="81.3" x2="1039.46" y2="378.3" stroke="#ececec" stroke-width="0.8" stroke-dasharray="2.5,3"/>
<line x1="1050.76" y1="81.3" x2="1050.76" y2="378.3" stroke="#ececec" stroke-width="0.8" stroke-dasharray="2.5,3"/>
<line x1="1062.05" y1="81.3" x2="1062.05" y2="378.3" stroke="#ececec" stroke-width="0.8" stroke-dasharray="2.5,3"/>
<line x1="1073.35" y1="81.3" x2="1073.35" y2="378.3" stroke="#ececec" stroke-width="0.8" stroke-dasharray="2.5,3"/>
<line x1="1084.65" y1="81.3" x2="1084.65" y2="378.3" stroke="#ececec" stroke-width="0.8" stroke-dasharray="2.5,3"/>
<line x1="1095.95" y1="81.3" x2="1095.95" y2="378.3" stroke="#ececec" stroke-width="0.8" stroke-dasharray="2.5,3"/>
<line x1="1107.24" y1="81.3" x2="1107.24" y2="378.3" stroke="#ececec" stroke-width="0.8" stroke-dasharray="2.5,3"/>
<line x1="1118.54" y1="81.3" x2="1118.54" y2="378.3" stroke="#ececec" stroke-width="0.8" stroke-dasharray="2.5,3"/>
<line x1="1129.84" y1="81.3" x2="1129.84" y2="378.3" stroke="#ececec" stroke-width="0.8" stroke-dasharray="2.5,3"/>
<line x1="1141.13" y1="81.3" x2="1141.13" y2="378.3" stroke="#ececec" stroke-width="0.8" stroke-dasharray="2.5,3"/>
<line x1="1152.43" y1="81.3" x2="1152.43" y2="378.3" stroke="#ececec" stroke-width="0.8" stroke-dasharray="2.5,3"/>
<line x1="1163.73" y1="81.3" x2="1163.73" y2="378.3" stroke="#ececec" stroke-width="0.8" stroke-dasharray="2.5,3"/>
<line x1="1175.03" y1="81.3" x2="1175.03" y2="378.3" stroke="#ececec" stroke-width="0.8" stroke-dasharray="2.5,3"/>
<line x1="1186.32" y1="81.3" x2="1186.32" y2="378.3" stroke="#ececec" stroke-width="0.8" stroke-dasharray="2.5,3"/>
<line x1="1197.62" y1="81.3" x2="1197.62" y2="378.3" stroke="#ececec" stroke-width="0.8" stroke-dasharray="2.5,3"/>
<line x1="1208.92" y1="81.3" x2="1208.92" y2="378.3" stroke="#ececec" stroke-width="0.8" stroke-dasharray="2.5,3"/>
<line x1="1220.21" y1="81.3" x2="1220.21" y2="378.3" stroke="#ececec" stroke-width="0.8" stroke-dasharray="2.5,3"/>
<line x1="1231.51" y1="81.3" x2="1231.51" y2="378.3" stroke="#ececec" stroke-width="0.8" stroke-dasharray="2.5,3"/>
<line x1="1242.81" y1="81.3" x2="1242.81" y2="378.3" stroke="#ececec" stroke-width="0.8" stroke-dasharray="2.5,3"/>
<line x1="1254.11" y1="81.3" x2="1254.11" y2="378.3" stroke="#ececec" stroke-width="0.8" stroke-dasharray="2.5,3"/>
<line x1="1265.40" y1="81.3" x2="1265.40" y2="378.3" stroke="#ececec" stroke-width="0.8" stroke-dasharray="2.5,3"/>
<line x1="881.3" y1="347.52" x2="1276.7" y2="347.52" stroke="#e8e8e8" stroke-width="0.8" stroke-dasharray="3,3"/>
<line x1="881.3" y1="316.75" x2="1276.7" y2="316.75" stroke="#e8e8e8" stroke-width="0.8" stroke-dasharray="3,3"/>
<line x1="881.3" y1="285.97" x2="1276.7" y2="285.97" stroke="#e8e8e8" stroke-width="0.8" stroke-dasharray="3,3"/>
<line x1="881.3" y1="255.19" x2="1276.7" y2="255.19" stroke="#e8e8e8" stroke-width="0.8" stroke-dasharray="3,3"/>
<line x1="881.3" y1="224.41" x2="1276.7" y2="224.41" stroke="#e8e8e8" stroke-width="0.8" stroke-dasharray="3,3"/>
<line x1="881.3" y1="193.64" x2="1276.7" y2="193.64" stroke="#e8e8e8" stroke-width="0.8" stroke-dasharray="3,3"/>
<line x1="881.3" y1="162.86" x2="1276.7" y2="162.86" stroke="#e8e8e8" stroke-width="0.8" stroke-dasharray="3,3"/>
<line x1="881.3" y1="132.08" x2="1276.7" y2="132.08" stroke="#e8e8e8" stroke-width="0.8" stroke-dasharray="3,3"/>
<line x1="881.3" y1="101.31" x2="1276.7" y2="101.31" stroke="#e8e8e8" stroke-width="0.8" stroke-dasharray="3,3"/>
<line x1="881.3" y1="362.91" x2="1276.7" y2="362.91" stroke="#f2f2f2" stroke-width="0.6" stroke-dasharray="1,5"/>
<line x1="881.3" y1="332.13" x2="1276.7" y2="332.13" stroke="#f2f2f2" stroke-width="0.6" stroke-dasharray="1,5"/>
<line x1="881.3" y1="301.36" x2="1276.7" y2="301.36" stroke="#f2f2f2" stroke-width="0.6" stroke-dasharray="1,5"/>
<line x1="881.3" y1="270.58" x2="1276.7" y2="270.58" stroke="#f2f2f2" stroke-width="0.6" stroke-dasharray="1,5"/>
<line x1="881.3" y1="239.80" x2="1276.7" y2="239.80" stroke="#f2f2f2" stroke-width="0.6" stroke-dasharray="1,5"/>
<line x1="881.3" y1="209.03" x2="1276.7" y2="209.03" stroke="#f2f2f2" stroke-width="0.6" stroke-dasharray="1,5"/>
<line x1="881.3" y1="178.25" x2="1276.7" y2="178.25" stroke="#f2f2f2" stroke-width="0.6" stroke-dasharray="1,5"/>
<line x1="881.3" y1="147.47" x2="1276.7" y2="147.47" stroke="#f2f2f2" stroke-width="0.6" stroke-dasharray="1,5"/>
<line x1="881.3" y1="116.69" x2="1276.7" y2="116.69" stroke="#f2f2f2" stroke-width="0.6" stroke-dasharray="1,5"/>
<line x1="881.3" y1="85.92" x2="1276.7" y2="85.92" stroke="#f2f2f2" stroke-width="0.6" stroke-dasharray="1,5"/>
<line x1="881.3" y1="81.3" x2="1276.7" y2="81.3" stroke="#a9bad3" stroke-width="1"/>
<line x1="1276.7" y1="81.3" x2="1276.7" y2="378.3" stroke="#a9bad3" stroke-width="1"/>
<line x1="881.3" y1="81.3" x2="881.3" y2="378.3" stroke="#c8c8c8" stroke-width="1"/>
<line x1="881.3" y1="378.3" x2="1276.7" y2="378.3" stroke="#cfcfcf" stroke-width="0.9"/>
<line x1="881.30" y1="378.3" x2="881.30" y2="382.3" stroke="#999" stroke-width="0.8"/>
<line x1="892.60" y1="378.3" x2="892.60" y2="380.90000000000003" stroke="#999" stroke-width="0.8"/>
<line x1="903.89" y1="378.3" x2="903.89" y2="380.90000000000003" stroke="#999" stroke-width="0.8"/>
<line x1="915.19" y1="378.3" x2="915.19" y2="380.90000000000003" stroke="#999" stroke-width="0.8"/>
<line x1="926.49" y1="378.3" x2="926.49" y2="380.90000000000003" stroke="#999" stroke-width="0.8"/>
<line x1="937.79" y1="378.3" x2="937.79" y2="382.3" stroke="#999" stroke-width="0.8"/>
<line x1="949.08" y1="378.3" x2="949.08" y2="380.90000000000003" stroke="#999" stroke-width="0.8"/>
<line x1="960.38" y1="378.3" x2="960.38" y2="380.90000000000003" stroke="#999" stroke-width="0.8"/>
<line x1="971.68" y1="378.3" x2="971.68" y2="380.90000000000003" stroke="#999" stroke-width="0.8"/>
<line x1="982.97" y1="378.3" x2="982.97" y2="380.90000000000003" stroke="#999" stroke-width="0.8"/>
<line x1="994.27" y1="378.3" x2="994.27" y2="382.3" stroke="#999" stroke-width="0.8"/>
<line x1="1005.57" y1="378.3" x2="1005.57" y2="380.90000000000003" stroke="#999" stroke-width="0.8"/>
<line x1="1016.87" y1="378.3" x2="1016.87" y2="380.90000000000003" stroke="#999" stroke-width="0.8"/>
<line x1="1028.16" y1="378.3" x2="1028.16" y2="380.90000000000003" stroke="#999" stroke-width="0.8"/>
<line x1="1039.46" y1="378.3" x2="1039.46" y2="380.90000000000003" stroke="#999" stroke-width="0.8"/>
<line x1="1050.76" y1="378.3" x2="1050.76" y2="382.3" stroke="#999" stroke-width="0.8"/>
<line x1="1062.05" y1="378.3" x2="1062.05" y2="380.90000000000003" stroke="#999" stroke-width="0.8"/>
<line x1="1073.35" y1="378.3" x2="1073.35" y2="380.90000000000003" stroke="#999" stroke-width="0.8"/>
<line x1="1084.65" y1="378.3" x2="1084.65" y2="380.90000000000003" stroke="#999" stroke-width="0.8"/>
<line x1="1095.95" y1="378.3" x2="1095.95" y2="380.90000000000003" stroke="#999" stroke-width="0.8"/>
<line x1="1107.24" y1="378.3" x2="1107.24" y2="382.3" stroke="#999" stroke-width="0.8"/>
<line x1="1118.54" y1="378.3" x2="1118.54" y2="380.90000000000003" stroke="#999" stroke-width="0.8"/>
<line x1="1129.84" y1="378.3" x2="1129.84" y2="380.90000000000003" stroke="#999" stroke-width="0.8"/>
<line x1="1141.13" y1="378.3" x2="1141.13" y2="380.90000000000003" stroke="#999" stroke-width="0.8"/>
<line x1="1152.43" y1="378.3" x2="1152.43" y2="380.90000000000003" stroke="#999" stroke-width="0.8"/>
<line x1="1163.73" y1="378.3" x2="1163.73" y2="382.3" stroke="#999" stroke-width="0.8"/>
<line x1="1175.03" y1="378.3" x2="1175.03" y2="380.90000000000003" stroke="#999" stroke-width="0.8"/>
<line x1="1186.32" y1="378.3" x2="1186.32" y2="380.90000000000003" stroke="#999" stroke-width="0.8"/>
<line x1="1197.62" y1="378.3" x2="1197.62" y2="380.90000000000003" stroke="#999" stroke-width="0.8"/>
<line x1="1208.92" y1="378.3" x2="1208.92" y2="380.90000000000003" stroke="#999" stroke-width="0.8"/>
<line x1="1220.21" y1="378.3" x2="1220.21" y2="382.3" stroke="#999" stroke-width="0.8"/>
<line x1="1231.51" y1="378.3" x2="1231.51" y2="380.90000000000003" stroke="#999" stroke-width="0.8"/>
<line x1="1242.81" y1="378.3" x2="1242.81" y2="380.90000000000003" stroke="#999" stroke-width="0.8"/>
<line x1="1254.11" y1="378.3" x2="1254.11" y2="380.90000000000003" stroke="#999" stroke-width="0.8"/>
<line x1="1265.40" y1="378.3" x2="1265.40" y2="380.90000000000003" stroke="#999" stroke-width="0.8"/>
<line x1="1276.70" y1="378.3" x2="1276.70" y2="382.3" stroke="#999" stroke-width="0.8"/>
<line x1="877.8" y1="378.30" x2="881.3" y2="378.30" stroke="#aaa" stroke-width="0.8"/>
<line x1="877.8" y1="347.52" x2="881.3" y2="347.52" stroke="#aaa" stroke-width="0.8"/>
<line x1="877.8" y1="316.75" x2="881.3" y2="316.75" stroke="#aaa" stroke-width="0.8"/>
<line x1="877.8" y1="285.97" x2="881.3" y2="285.97" stroke="#aaa" stroke-width="0.8"/>
<line x1="877.8" y1="255.19" x2="881.3" y2="255.19" stroke="#aaa" stroke-width="0.8"/>
<line x1="877.8" y1="224.41" x2="881.3" y2="224.41" stroke="#aaa" stroke-width="0.8"/>
<line x1="877.8" y1="193.64" x2="881.3" y2="193.64" stroke="#aaa" stroke-width="0.8"/>
<line x1="877.8" y1="162.86" x2="881.3" y2="162.86" stroke="#aaa" stroke-width="0.8"/>
<line x1="877.8" y1="132.08" x2="881.3" y2="132.08" stroke="#aaa" stroke-width="0.8"/>
<line x1="877.8" y1="101.31" x2="881.3" y2="101.31" stroke="#aaa" stroke-width="0.8"/>
<line x1="877.8" y1="81.30" x2="881.3" y2="81.30" stroke="#aaa" stroke-width="0.8"/>
</svg>
<div class="t" style="left:835px;width:40px;text-align:right;top:373.10px;font-size:7.2px;color:#4a4a4a">0.0</div>
<div class="t" style="left:835px;width:40px;text-align:right;top:343.92px;font-size:7.2px;color:#4a4a4a">10.0</div>
<div class="t" style="left:835px;width:40px;text-align:right;top:313.15px;font-size:7.2px;color:#4a4a4a">20.0</div>
<div class="t" style="left:835px;width:40px;text-align:right;top:282.37px;font-size:7.2px;color:#4a4a4a">30.0</div>
<div class="t" style="left:835px;width:40px;text-align:right;top:251.59px;font-size:7.2px;color:#4a4a4a">40.0</div>
<div class="t" style="left:835px;width:40px;text-align:right;top:220.81px;font-size:7.2px;color:#4a4a4a">50.0</div>
<div class="t" style="left:835px;width:40px;text-align:right;top:190.04px;font-size:7.2px;color:#4a4a4a">60.0</div>
<div class="t" style="left:835px;width:40px;text-align:right;top:159.26px;font-size:7.2px;color:#4a4a4a">70.0</div>
<div class="t" style="left:835px;width:40px;text-align:right;top:128.48px;font-size:7.2px;color:#4a4a4a">80.0</div>
<div class="t" style="left:835px;width:40px;text-align:right;top:97.71px;font-size:7.2px;color:#4a4a4a">90.0</div>
<div class="t" style="left:835px;width:40px;text-align:right;top:80.50px;font-size:7.2px;color:#4a4a4a">96.5</div>
<div class="t" style="left:867.70px;width:40px;text-align:center;top:384px;font-size:7.2px;color:#4a4a4a">400</div>
<div class="t" style="left:917.79px;width:40px;text-align:center;top:384px;font-size:7.2px;color:#4a4a4a">500</div>
<div class="t" style="left:974.27px;width:40px;text-align:center;top:384px;font-size:7.2px;color:#4a4a4a">600</div>
<div class="t" style="left:1030.76px;width:40px;text-align:center;top:384px;font-size:7.2px;color:#4a4a4a">700</div>
<div class="t" style="left:1087.24px;width:40px;text-align:center;top:384px;font-size:7.2px;color:#4a4a4a">800</div>
<div class="t" style="left:1143.73px;width:40px;text-align:center;top:384px;font-size:7.2px;color:#4a4a4a">900</div>
<div class="t" style="left:1200.21px;width:40px;text-align:center;top:384px;font-size:7.2px;color:#4a4a4a">1000</div>
<div class="t" style="left:1249.20px;width:40px;text-align:center;top:384px;font-size:7.2px;color:#4a4a4a">1100</div>
<div class="t" style="left:1047.2px;top:392.48px;font-size:9.04px;color:#555;transform:scaleX(0.8850);transform-origin:0 50%">Wavelength [nm]</div>
<div class="t" style="left:795px;width:120px;text-align:center;top:225px;height:8.3px;font-size:8.3px;color:#555;transform:rotate(-90deg)">Transmittance Magnitude [%]</div>
<svg class="a" style="left:842px;top:77px" width="496" height="332" viewBox="842 77 496 332"><path d="M881.40,375.50 C881.83,375.75 882.90,376.78 884.00,377.00 C885.10,377.22 882.00,376.77 888.00,376.80 C894.00,376.83 914.00,377.33 920.00,377.20 C926.00,377.07 923.00,376.42 924.00,376.00 C925.00,375.58 925.17,374.57 926.00,374.70 C926.83,374.83 927.50,376.45 929.00,376.80 C930.50,377.15 932.83,376.88 935.00,376.80 C937.17,376.72 940.17,376.47 942.00,376.30 C943.83,376.13 944.67,375.72 946.00,375.80 C947.33,375.88 948.00,376.60 950.00,376.80 C952.00,377.00 956.33,377.08 958.00,377.00 C959.67,376.92 959.33,376.27 960.00,376.30 C960.67,376.33 954.00,377.08 962.00,377.20 C970.00,377.32 999.17,377.12 1008.00,377.00 C1016.83,376.88 1012.67,376.58 1015.00,376.50 C1017.33,376.42 1020.00,376.67 1022.00,376.50 C1024.00,376.33 1025.67,375.85 1027.00,375.50 C1028.33,375.15 1028.93,375.40 1030.00,374.40 C1031.07,373.40 1032.40,370.78 1033.40,369.50 C1034.40,368.22 1034.72,367.68 1036.00,366.70 C1037.28,365.72 1039.68,365.32 1041.10,363.60 C1042.52,361.88 1043.50,359.88 1044.50,356.40 C1045.50,352.92 1046.38,347.83 1047.10,342.70 C1047.82,337.57 1048.28,331.30 1048.80,325.60 C1049.32,319.90 1049.78,316.10 1050.20,308.50 C1050.62,300.90 1050.68,290.75 1051.30,280.00 C1051.92,269.25 1053.00,252.13 1053.90,244.00 C1054.80,235.87 1055.52,234.47 1056.70,231.20 C1057.88,227.93 1059.83,225.40 1061.00,224.40 C1062.17,223.40 1062.65,227.27 1063.70,225.20 C1064.75,223.13 1065.98,216.70 1067.30,212.00 C1068.62,207.30 1070.53,202.33 1071.60,197.00 C1072.67,191.67 1072.97,189.17 1073.70,180.00 C1074.43,170.83 1075.37,155.45 1076.00,142.00 C1076.63,128.55 1076.97,108.97 1077.50,99.30 C1078.03,89.63 1078.57,83.28 1079.20,84.00 C1079.83,84.72 1080.58,96.07 1081.30,103.60 C1082.02,111.13 1082.78,123.33 1083.50,129.20 C1084.22,135.07 1084.72,140.93 1085.60,138.80 C1086.48,136.67 1087.92,124.40 1088.80,116.40 C1089.68,108.40 1090.12,96.42 1090.90,90.80 C1091.68,85.18 1092.60,81.28 1093.50,82.70 C1094.40,84.12 1095.30,92.25 1096.30,99.30 C1097.30,106.35 1098.33,119.02 1099.50,125.00 C1100.67,130.98 1102.07,135.92 1103.30,135.20 C1104.53,134.48 1105.58,126.32 1106.90,120.70 C1108.22,115.08 1109.85,105.95 1111.20,101.50 C1112.55,97.05 1113.22,94.25 1115.00,94.00 C1116.78,93.75 1119.05,101.95 1121.90,100.00 C1124.75,98.05 1129.33,83.45 1132.10,82.30 C1134.87,81.15 1136.45,90.05 1138.50,93.10 C1140.55,96.15 1142.27,101.12 1144.40,100.60 C1146.53,100.08 1148.98,92.70 1151.30,90.00 C1153.62,87.30 1155.98,84.40 1158.30,84.40 C1160.62,84.40 1162.98,88.37 1165.20,90.00 C1167.42,91.63 1169.47,93.05 1171.60,94.20 C1173.73,95.35 1175.68,95.65 1178.00,96.90 C1180.32,98.15 1183.02,100.52 1185.50,101.70 C1187.98,102.88 1190.07,104.28 1192.90,104.00 C1195.73,103.72 1199.72,101.28 1202.50,100.00 C1205.28,98.72 1206.82,97.27 1209.60,96.30 C1212.38,95.33 1215.47,94.28 1219.20,94.20 C1222.93,94.12 1227.73,95.05 1232.00,95.80 C1236.27,96.55 1240.72,98.97 1244.80,98.70 C1248.88,98.43 1252.97,95.65 1256.50,94.20 C1260.03,92.75 1262.63,91.03 1266.00,90.00 C1269.37,88.97 1274.92,88.33 1276.70,88.00" fill="none" stroke="#58ae9f" stroke-width="1.3"/></svg>
<svg class="a" style="left:1205px;top:111px" width="6" height="6" viewBox="0 0 6 6"><path d="M0.8 0.8L5.2 5.2M5.2 0.8L0.8 5.2" stroke="#e85a5a" stroke-width="0.9"/></svg><div class="t" style="left:1138px;top:117.90px;font-size:7.01px;color:#3a3a3a;transform:scaleX(0.8850);transform-origin:0 50%">Range: 750.000 - 1100.000</div><div class="t" style="left:1138px;top:128.10px;font-size:7.01px;color:#3a3a3a;transform:scaleX(0.8850);transform-origin:0 50%">T Mean-pol (45deg)</div><div class="t" style="left:1138px;top:138.30px;font-size:7.01px;color:#3a3a3a;transform:scaleX(0.8850);transform-origin:0 50%">Average Value = 91.167</div>
<svg class="a" style="left:1000.9px;top:330.7px" width="6" height="6" viewBox="0 0 6 6"><path d="M0.8 0.8L5.2 5.2M5.2 0.8L0.8 5.2" stroke="#e85a5a" stroke-width="0.9"/></svg><div class="t" style="left:938px;top:337.40px;font-size:7.01px;color:#3a3a3a;transform:scaleX(0.8850);transform-origin:0 50%">Range: 400.000 - 690.000</div><div class="t" style="left:938px;top:347.60px;font-size:7.01px;color:#3a3a3a;transform:scaleX(0.8850);transform-origin:0 50%">T Mean-pol (45deg)</div><div class="t" style="left:938px;top:357.80px;font-size:7.01px;color:#3a3a3a;transform:scaleX(0.8850);transform-origin:0 50%">Average Value = 0.431</div>
<div class="a" style="left:1256.7px;top:79.3px;width:76.6px;height:27.7px;background:#fff;border:1px solid #d5dfe9;border-radius:3px"></div>
<div class="t" style="left:1262px;top:83.06px;font-size:7.68px;font-weight:bold;color:#333;transform:scaleX(0.8850);transform-origin:0 50%">Legend</div>
<div class="a" style="left:1262px;top:96.5px;width:5px;height:5px;border-radius:50%;background:#3d9a8c"></div>
<div class="t" style="left:1269.4px;top:95.06px;font-size:7.57px;color:#555;transform:scaleX(0.8850);transform-origin:0 50%">T Mean-pol (45deg)</div>
<svg class="a" style="left:1339px;top:242.5px" width="9" height="8" viewBox="0 0 9 8"><path d="M4 0.8L1 4L4 7.2M8 0.8L5 4L8 7.2" stroke="#3d6ab8" stroke-width="1.3" fill="none"/></svg>
<svg class="a" style="left:1091.5px;top:410.5px" width="8" height="8.5" viewBox="0 0 8 8.5"><path d="M0.8 3.8L4 0.8L7.2 3.8M0.8 7.6L4 4.6L7.2 7.6" stroke="#3d6ab8" stroke-width="1.2" fill="none"/></svg>
</body></html>
